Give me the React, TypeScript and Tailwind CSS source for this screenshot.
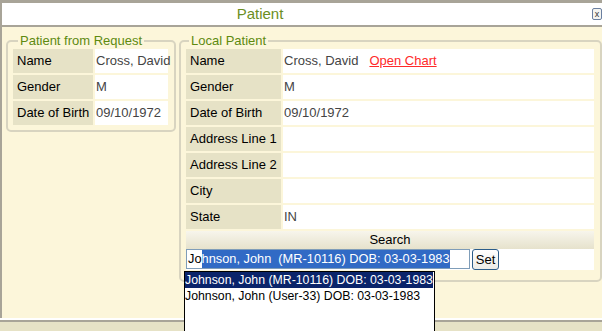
import React from 'react';

const font = { fontFamily: '"Liberation Sans", Arial, sans-serif' };

const Row = ({ label, value, labelW, valueW, children }: { label: string; value?: string; labelW: string; valueW: string; children?: React.ReactNode }) => (
  <div className="flex gap-[2px] h-[24px]">
    <div className={`${labelW} bg-[#e6e2c6] flex items-center pl-[4px] text-[13px] text-black whitespace-nowrap`}>{label}</div>
    <div className={`${valueW} bg-white flex items-center pl-[1px] text-[13px] text-[#444] whitespace-nowrap`}>
      {value}
      {children}
    </div>
  </div>
);

const App = () => {
  const local = [
    ['Gender', 'M'],
    ['Date of Birth', '09/10/1972'],
    ['Address Line 1', ''],
    ['Address Line 2', ''],
    ['City', ''],
    ['State', 'IN'],
  ];

  return (
    <div className="relative w-[602px] h-[331px] overflow-hidden bg-[#e6e2c6]" style={font}>
      <div className="h-[318px] border-t-[3px] border-l-[2px] border-[#a8a498] flex flex-col">
        {/* title bar */}
        <div className="relative h-[22px] bg-white flex items-center justify-center pr-[84px] border-b-[2px] border-[#a8a498] box-content">
          <span className="text-[15px] text-[#6b8e23]">Patient</span>
          <div className="absolute right-[0px] top-[5px] w-[10px] h-[12px] border border-[#6a7fa0] rounded-[2px] bg-[#f4f4f0] text-[9px] leading-[10px] text-center text-[#333]">x</div>
        </div>

        {/* body */}
        <div className="flex-1 bg-[#fcf6da] flex items-start gap-[3px] pl-[4px] pt-[7px]">
          <fieldset className="w-[170px] h-[98px] border-[2px] border-[#d8d4c0] rounded-[5px] pl-[5px] pr-[5px]">
            <legend className="px-[2px] ml-[5px] text-[13px] text-[#5e8a10] leading-[14px]">Patient from Request</legend>
            <div className="flex flex-col gap-[2px] mt-[1px]">
              <Row label="Name" value="Cross, David" labelW="w-[80px]" valueW="w-[73px]" />
              <Row label="Gender" value="M" labelW="w-[80px]" valueW="w-[73px]" />
              <Row label="Date of Birth" value="09/10/1972" labelW="w-[80px]" valueW="w-[73px]" />
            </div>
          </fieldset>

          <fieldset className="w-[423px] h-[248px] border-[2px] border-[#d8d4c0] rounded-[5px] pl-[5px] pr-[6px]">
            <legend className="px-[2px] ml-[3px] text-[13px] text-[#5e8a10] leading-[14px]">Local Patient</legend>
            <div className="flex flex-col gap-[2px] mt-[1px]">
              <Row label="Name" value="Cross, David" labelW="w-[95px]" valueW="w-[311px]">
                <span className="ml-[11px] text-[#ff2a2a] underline">Open Chart</span>
              </Row>
              {local.map(([l, v]) => (
                <Row key={l} label={l} value={v} labelW="w-[95px]" valueW="w-[311px]" />
              ))}
              <div className="h-[18px] bg-gradient-to-b from-[#f7f5ec] to-[#e6e2cc] flex items-center justify-center text-[13px] text-black">Search</div>
            </div>
            <div className="flex items-center gap-[2px] bg-white w-[408px] h-[22px] -mt-[1px]">
              <div className="w-[284px] h-[20px] border border-[#7f9db9] flex items-center pl-[1px] text-[12.8px] text-black whitespace-nowrap overflow-hidden">
                <span>Jo</span>
                <span className="bg-[#316ac5] text-white">hnson, John&nbsp; (MR-10116) DOB: 03-03-1983</span>
              </div>
              <button className="w-[27px] h-[21px] border border-[#2c5d8a] rounded-[3px] bg-gradient-to-b from-white to-[#ecebe6] text-[13px] text-black leading-none">Set</button>
            </div>
          </fieldset>
        </div>
      </div>
      <div className="h-[2px] bg-white" />
      <div className="h-[2px] bg-[#a8a498]" />

      {/* autocomplete menu */}
      <div className="absolute left-[184px] top-[271px] w-[251px] h-[70px] bg-white border border-black flex flex-col text-[12.3px] leading-[16px]">
        <div className="self-start bg-[#0a246a] text-white whitespace-nowrap">Johnson, John (MR-10116) DOB: 03-03-1983</div>
        <div className="text-black whitespace-nowrap">Johnson, John (User-33) DOB: 03-03-1983</div>
      </div>
    </div>
  );
};

export default App;
